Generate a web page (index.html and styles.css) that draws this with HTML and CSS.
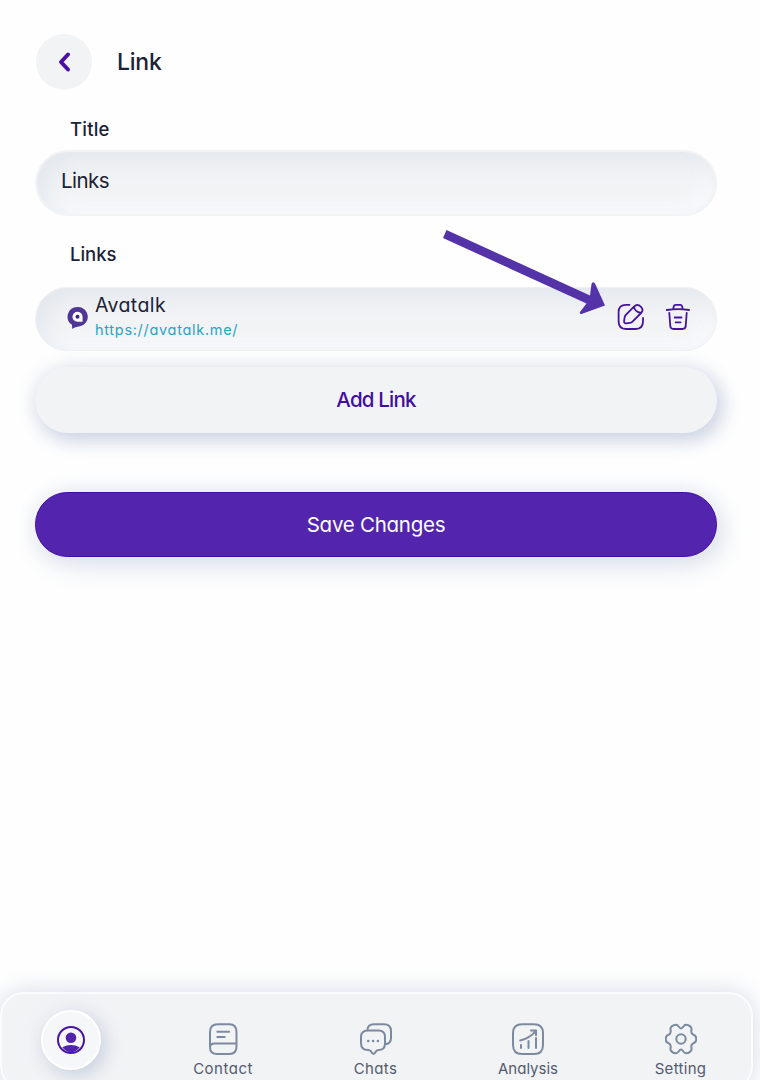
FILE: index.html
```html
<!DOCTYPE html>
<html lang="en">
<head>
<meta charset="utf-8">
<title>Link</title>
<link rel="stylesheet" href="styles.css">
</head>
<body>
<div class="app">
  <header class="header">
    <button class="back" aria-label="Back"><svg width="56" height="56" viewBox="0 0 56 56"><path d="M32 20.500L25 28l7 7.500" fill="none" stroke="#4910a6" stroke-width="4" stroke-linecap="round" stroke-linejoin="round"/></svg></button>
    <h1 class="heading"><span class="t-heading">Link</span></h1>
  </header>
  <main class="form">
    <label class="label"><span class="t-title">Title</span></label>
    <div class="field"><span class="t-value">Links</span></div>
    <label class="label label-links"><span>Links</span></label>
    <div class="link-row">
      <svg class="logo" width="22" height="24" viewBox="0 0 22 24"><path d="M11 0.500a10.200 10.200 0 0 1 2.500 20.200C10 21.500 7.500 22 5.500 23.400L5.200 19.200A10.200 10.200 0 0 1 11 .5z" fill="#4d3695"/><path d="M16.300 10.800V16H11a5.300 5.300 0 1 1 5.300-5.200z" fill="#fff"/><circle cx="11" cy="10.800" r="2.100" fill="#3c2189"/></svg>
      <div class="link-info"><div class="link-name"><span class="t-name">Avatalk</span></div><a class="link-url"><span class="t-url">https://avatalk.me/</span></a></div>
      <div class="actions">
        <svg width="28" height="28" viewBox="0 0 28 28" fill="none" stroke="#4412a4" stroke-width="1.800" stroke-linecap="round" stroke-linejoin="round"><path d="M12.500 1.800H9Q1.600 1.800 1.600 9v9.500Q1.600 26 9 26h9.500Q26 26 26 18.500V15"/><path d="M17 3.600L8.600 12.200Q7.700 13.200 7.500 15L7.100 18.300Q7 20.500 9.200 20.300L12.900 19.900Q14.500 19.700 15.500 18.700L24.100 10Q27 7 24 3.800Q20.500.4 17 3.600zM17 3.600Q17.600 8.800 24 10"/></svg>
        <svg width="26" height="28" viewBox="0 0 26 28" fill="none" stroke="#4412a4" stroke-width="1.800" stroke-linecap="round" stroke-linejoin="round"><path d="M1.800 7Q13 5.200 24 7M8.200 6l.6-2.700Q9.100 1.800 10.800 1.800h4.300q1.600 0 2 1.500l.6 2.700M4.300 10l1 13q.2 3 3.200 3h9q3 0 3.200-3l1-13M9.700 14.500h6.800M10.600 19.300h5"/></svg>
      </div>
    </div>
    <button class="button add"><span class="t-add">Add Link</span></button>
    <button class="button save"><span class="t-save">Save Changes</span></button>
  </main>
  <nav class="nav">
    <a class="tab"><span class="avatar"><svg width="30" height="30" viewBox="0 0 30 30"><circle cx="15" cy="15" r="13" fill="none" stroke="#4814a7" stroke-width="2"/><circle cx="15" cy="12.800" r="5.300" fill="#5224ae"/><path d="M6.300 22.300Q14.900 17.700 23.700 22.300Q20 27.400 15 27.400T6.300 22.300z" fill="#5224ae"/></svg></span></a>
    <a class="tab"><svg class="icon" viewBox="0 0 32 32"><path d="M3 24V9Q3 1.200 10.500 1.200h12Q29.500 1.200 29.500 9v14.500Q29.500 31 22.500 31H10Q3 31 3 24Q3 20.400 7.500 20.400h22M10.300 8.800h11.800M10.300 14h7.500"/></svg><span class="t-contact">Contact</span></a>
    <a class="tab"><svg class="icon" viewBox="0 0 32 32"><path d="M7.200 7.500Q7.700 1.200 14 1.200h10Q31 1.200 31 8v7Q31 21 25 21.200M8 7.500h10.500Q25 7.500 25 14v6.500Q25 27 18.500 27Q17 27 16 28.400l-1.200 1.800q-1.300 1.500-2.600 0L11 28.400Q10 27 8 27Q1 27 1 20v-6Q1 7.500 8 7.500z"/><path class="dots" d="M8.200 18h.1M13 18h.1M17.900 18h.1"/></svg><span class="t-chats">Chats</span></a>
    <a class="tab"><svg class="icon" viewBox="0 0 32 32"><path d="M10 1.200h12Q31 1.200 31 10v12Q31 31 22 31H10Q1 31 1 22V10Q1 1.200 10 1.200zM9 25v-3M16.500 25v-7M24 25V15M8.200 17.500Q17.500 15.200 24 7.800M19 7.500h5v4.800"/></svg><span class="t-analysis">Analysis</span></a>
    <a class="tab"><svg class="icon" viewBox="0 0 32 32"><circle cx="16" cy="16" r="4.700"/><path d="M16 5.400C18.100 5.400 18.300 1.700 21 1.700C23.500 1.700 27.200 3.800 26.500 6.800C26 9 25.800 10.500 28 11.500C32.400 12.500 32.400 19.500 28 20.500C25.800 21.500 26 23 26.500 25.200C27.200 28.200 23.500 30.300 21 30.300C18.300 30.300 18.100 26.600 16 26.600S13.700 30.300 11 30.300C8.500 30.300 4.800 28.200 5.500 25.200C6 23 6.200 21.500 4 20.500C-.4 19.500-.4 12.500 4 11.500C6.200 10.500 6 9 5.500 6.800C4.800 3.800 8.500 1.700 11 1.700C13.700 1.700 13.900 5.400 16 5.400z"/></svg><span class="t-setting">Setting</span></a>
  </nav>
  <svg class="pointer" width="164" height="86" viewBox="0 0 164 86"><path d="M3.500 0L147 65.500 148.500 54Q149.500 51 152 53.500L162 75.500 138.500 84Q136 84 137 82L143.500 73.500 0 8z" fill="#5433a8"/></svg>
</div>
</body>
</html>
```
FILE: styles.css
```css
* { box-sizing: border-box; }
body { margin: 0; background: #fefefe; color: #1b2236; font-family: Inter, "Liberation Sans", sans-serif; font-feature-settings: "cv11"; }
button { border: 0; padding: 0; font: inherit; font-feature-settings: inherit; }
svg { display: block; }
span { white-space: nowrap; }
.app { position: relative; height: 1080px; display: flex; flex-direction: column; overflow: hidden; }
.header { display: flex; align-items: center; gap: 25px; padding: 34px 36px 0; }
.back { width: 56px; height: 56px; border-radius: 50%; background: #f2f3f5; }
.heading { margin: 0; font-size: 23px; font-weight: 500; line-height: 32px; }
.t-heading { letter-spacing: -0.25px; }
.form { display: flex; flex-direction: column; width: 682px; margin-left: 35px; padding-top: 24px; }
.label { height: 30px; padding-left: 35px; font-size: 18.500px; font-weight: 500; line-height: 30px; }
.t-title { letter-spacing: 0.2px; }
.field { height: 66px; margin-top: 6px; padding: 0 24px; border: 2px solid #f1f3f5; border-radius: 33px; font-size: 20.500px; line-height: 58px; background: #f2f3f5; box-shadow: inset 8px 10px 22px #e3e8ee, inset -6px -8px 18px #fafbfd; }
.t-value { letter-spacing: -0.55px; }
.label-links { margin-top: 23px; }
.link-row { display: flex; height: 64px; margin-top: 18px; padding: 0 25px 0 31px; border: 1px solid #eff0f3; border-radius: 32px; background: #f2f3f5; box-shadow: inset 8px 10px 22px #e3e8ee, inset -6px -8px 18px #fafbfd; }
.logo { width: 21px; margin-top: 18px; }
.link-info { margin-left: 7px; padding-top: 3px; }
.link-name { height: 28px; font-size: 19.500px; line-height: 28px; }
.t-name { letter-spacing: 0.4px; }
.link-url { display: block; height: 22px; font-size: 14.500px; line-height: 22px; color: #2aa3c3; }
.t-url { letter-spacing: 0.7px; }
.actions { display: flex; gap: 20px; margin: 15px 0 0 auto; }
.button { height: 66px; border-radius: 33px; font-size: 20.500px; line-height: 64px; text-align: center; }
.add { margin-top: 16px; background: #f2f3f5; color: #420ea1; font-weight: 500; box-shadow: 5px 7px 20px #cbd2e1, 0 0 24px #e9ecf3; }
.t-add { letter-spacing: -0.8px; }
.save { height: 65px; margin-top: 59px; background: #5325ae; color: #fff; border: 1px solid #430ca3; line-height: 63px; box-shadow: 5px 7px 28px #d9dfe9, 0 0 22px #eef0f6; }
.t-save { letter-spacing: -0.25px; }
.nav { display: grid; grid-template-columns: repeat(5, 152.500px); justify-content: center; width: 753px; height: 98px; margin-top: auto; border: 2px solid #fbfcfe; border-radius: 24px; background: #f2f3f5; box-shadow: 0 0 24px #d4dae6; margin-bottom: -10px; padding: 29px 2px 0 0; }
.tab { display: flex; flex-direction: column; align-items: center; font-size: 15px; line-height: 22px; color: #545b6e; }
.t-contact { letter-spacing: 0.5px; }
.t-chats { letter-spacing: 0.4px; }
.t-setting { letter-spacing: 0.3px; }
.icon { width: 32px; height: 32px; margin-bottom: 3px; fill: none; stroke: #7c8aa0; stroke-width: 2; stroke-linecap: round; stroke-linejoin: round; }
.dots { stroke-width: 2.500; }
.avatar { display: grid; place-items: center; flex: none; width: 60px; height: 60px; margin-top: -13px; border: 2px solid #fff; border-radius: 50%; background: #f6f7f9; box-shadow: 5px 6px 18px #cbd2e0, 0 0 24px #e6eaf1; }
.pointer { position: absolute; left: 443px; top: 230px; }
```
